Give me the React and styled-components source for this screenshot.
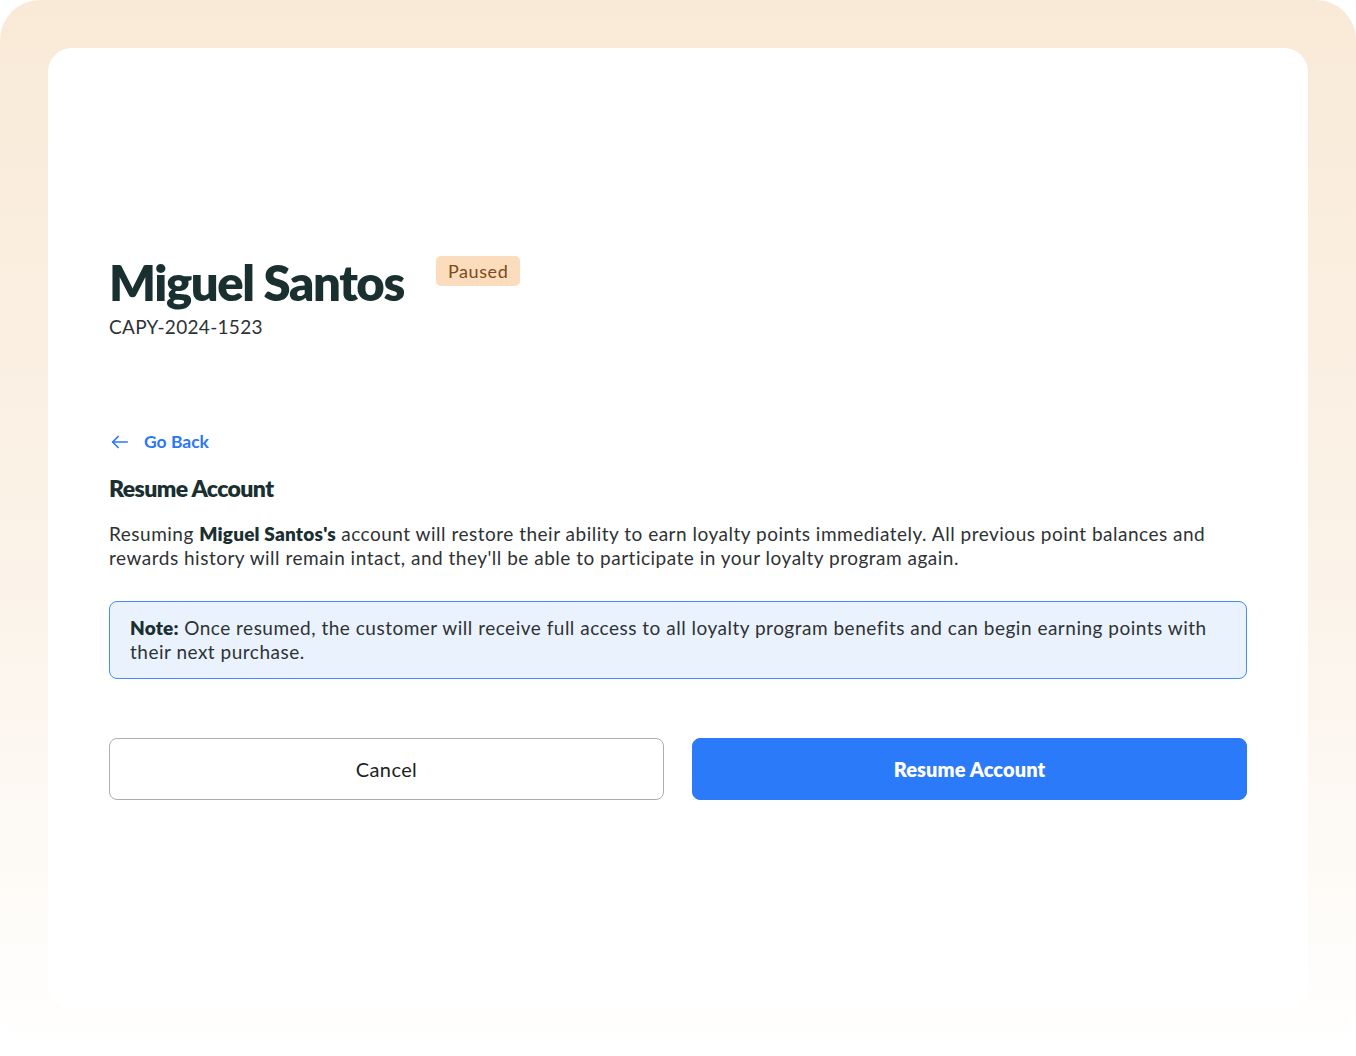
import React from 'react';
import styled, { createGlobalStyle } from 'styled-components';

const GlobalStyle = createGlobalStyle`
  html, body {
    margin: 0;
    padding: 0;
    background: #fff;
  }
  * { box-sizing: border-box; }
  body {
    font-family: Lato, "Noto Sans", sans-serif;
    color: #2b2f31;
  }
`;

const Frame = styled.div`
  width: 1356px;
  height: 1056px;
  padding: 48px;
  border-radius: 40px;
  background: linear-gradient(180deg, #f9ead7 0%, #fbf3e9 55%, #ffffff 100%);
`;

const Card = styled.div`
  height: 960px;
  background: #fff;
  border-radius: 24px;
  padding: 204px 61px 0 61px;
  display: flex;
  flex-direction: column;
`;

const Header = styled.div`
  display: flex;
  align-items: flex-start;
  gap: 32px;
`;

const Name = styled.h1`
  margin: 0;
  font-size: 49px;
  line-height: 60px;
  font-weight: 800;
  letter-spacing: -1.4px;
  color: #1a2f30;
`;

const Badge = styled.span`
  margin-top: 4px;
  background: #fbdcbc;
  color: #7b4a1d;
  font-size: 18px;
  line-height: 30px;
  padding: 0 12px;
  border-radius: 5px;
  letter-spacing: 0.6px;
`;

const Code = styled.div`
  margin-top: 3px;
  font-size: 19px;
  line-height: 24px;
  letter-spacing: 0.3px;
  color: #2e3234;
`;

const BackLink = styled.a`
  margin-top: 91px;
  display: flex;
  align-items: center;
  gap: 13px;
  color: #2a78f5;
  font-size: 17.5px;
  font-weight: 700;
  text-decoration: none;
  line-height: 24px;
`;

const Title = styled.h2`
  margin: 19px 0 0;
  font-size: 23px;
  line-height: 30px;
  font-weight: 800;
  letter-spacing: -0.6px;
  color: #1a2f30;
`;

const Text = styled.p`
  margin: 19px 0 0;
  font-size: 19px;
  line-height: 24px;
  letter-spacing: 0.5px;
  color: #2e3234;

  b { font-weight: 800; color: #1a2f30; letter-spacing: 0.2px; }
`;

const Note = styled.div`
  margin-top: 31px;
  padding: 14px 20px;
  background: #eaf2fe;
  border: 1.5px solid #4a8af5;
  border-radius: 8px;
  font-size: 19px;
  line-height: 24px;
  letter-spacing: 0.5px;
  color: #2e3234;

  b { font-weight: 800; color: #1a2f30; letter-spacing: 0.2px; }
`;

const Actions = styled.div`
  margin-top: 59px;
  display: grid;
  grid-template-columns: 1fr 1fr;
  gap: 28px;
`;

const Button = styled.button`
  height: 62px;
  border-radius: 8px;
  font-family: inherit;
  font-size: 20px;
  cursor: pointer;
  border: ${p => (p.$primary ? '1px solid #2a7af9' : '1px solid #adadad')};
  background: ${p => (p.$primary ? '#2a7af9' : '#fff')};
  color: ${p => (p.$primary ? '#fff' : '#222')};
  font-weight: ${p => (p.$primary ? 800 : 400)};
  letter-spacing: ${p => (p.$primary ? '0.1px' : '0.4px')};
`;

const ArrowLeft = () => (
  <svg width="22" height="22" viewBox="0 0 24 24" fill="none" stroke="#2a78f5" strokeWidth="1.8" strokeLinecap="round" strokeLinejoin="round">
    <path d="M20 12H4" />
    <path d="M10 6l-6 6 6 6" />
  </svg>
);

export default function App() {
  return (
    <>
      <GlobalStyle />
      <Frame>
        <Card>
          <Header>
            <Name>Miguel Santos</Name>
            <Badge>Paused</Badge>
          </Header>
          <Code>CAPY-2024-1523</Code>
          <BackLink href="#">
            <ArrowLeft />
            Go Back
          </BackLink>
          <Title>Resume Account</Title>
          <Text>
            Resuming <b>Miguel Santos's</b> account will restore their ability to earn loyalty points immediately. All previous point balances and rewards history will remain intact, and they'll be able to participate in your loyalty program again.
          </Text>
          <Note>
            <b>Note:</b> Once resumed, the customer will receive full access to all loyalty program benefits and can begin earning points with their next purchase.
          </Note>
          <Actions>
            <Button>Cancel</Button>
            <Button $primary>Resume Account</Button>
          </Actions>
        </Card>
      </Frame>
    </>
  );
}
